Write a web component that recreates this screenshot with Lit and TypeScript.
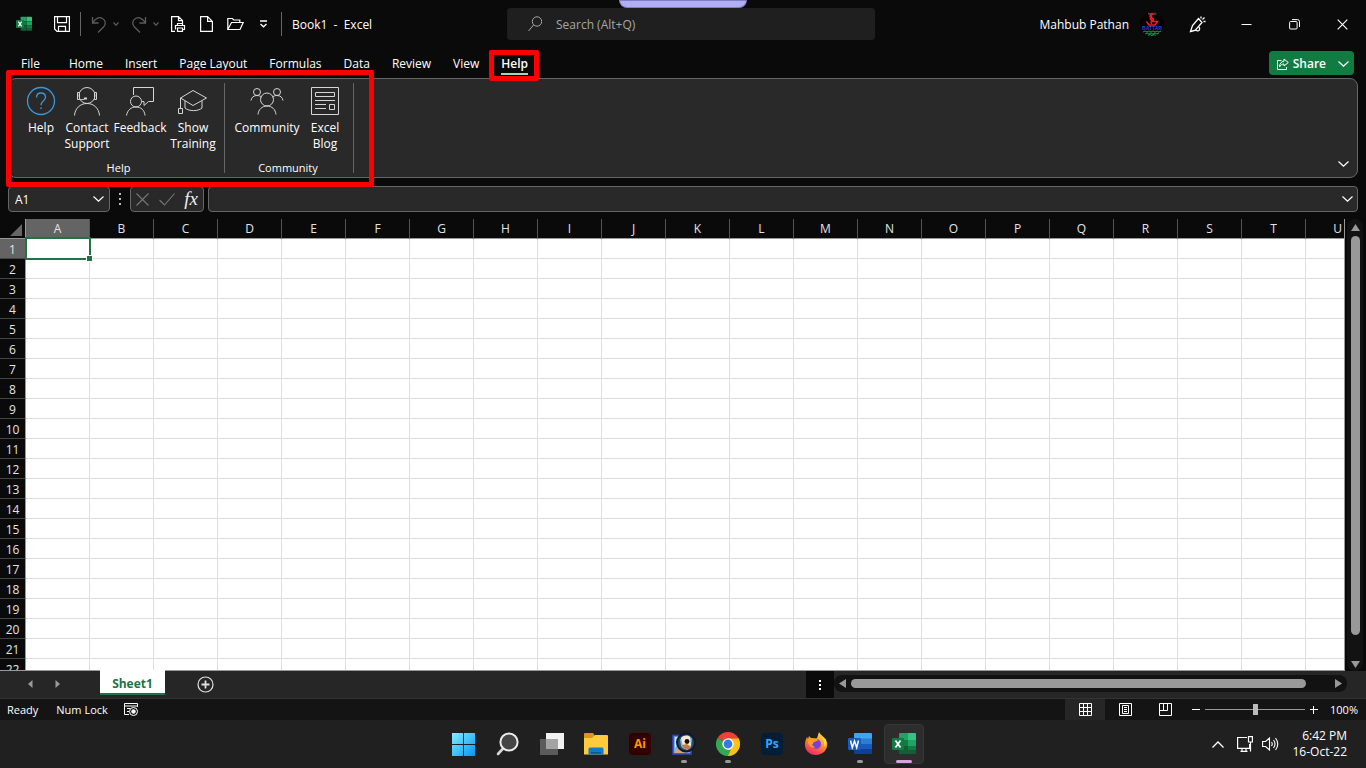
import { LitElement, html, svg, css, TemplateResult } from "lit";
import { customElement } from "lit/decorators.js";
import { classMap } from "lit/directives/class-map.js";

const icon = (w: number, h: number, body: unknown, cls = "") =>
  html`<svg class=${cls} width=${w} height=${h} viewBox="0 0 ${w} ${h}" fill="none" stroke="currentColor" aria-hidden="true">${body}</svg>`;

const chevron = (w = 11, h = 6) =>
  icon(w, h, svg`<path d="M.5 .5 L${w / 2} ${h - 0.8} L${w - 0.5} .5" stroke-width="1.2"/>`);

const excelLogo = (size: number) => html`<svg width=${size} height=${size} viewBox="0 0 24 24" aria-hidden="true">
  <path d="M8 1h8v7H7V2a1 1 0 0 1 1-1z" fill="#21a366"/>
  <path d="M16 1h7a1 1 0 0 1 1 1v6h-8z" fill="#33c481"/>
  <path d="M7 8h9v6H7z" fill="#107c41"/>
  <path d="M16 8h8v6h-8z" fill="#21a366"/>
  <path d="M7 14h9v8H8a1 1 0 0 1-1-1z" fill="#185c37"/>
  <path d="M16 14h8v7a1 1 0 0 1-1 1h-7z" fill="#185c37"/>
  <path d="M16 14h8v4h-8z" fill="#107c41"/>
  <rect x="0" y="6" width="12" height="12" rx="1" fill="#107c41"/>
  <path d="M3.500 8.500l5 7M8.500 8.500l-5 7" stroke="#fff" stroke-width="1.800"/>
</svg>`;

const wordLogo = html`<svg width="24" height="24" viewBox="0 0 24 24" aria-hidden="true">
  <path d="M7 1h16a1 1 0 0 1 1 1v5H6V2a1 1 0 0 1 1-1z" fill="#41a5ee"/>
  <path d="M6 6.500h18v5.500H6z" fill="#2b7cd3"/>
  <path d="M6 12h18v5H6z" fill="#185abd"/>
  <path d="M6 17h18v4a1 1 0 0 1-1 1H7a1 1 0 0 1-1-1z" fill="#103f91"/>
  <rect x="0" y="6" width="13" height="12" rx="1" fill="#185abd"/>
  <path d="M2.500 8.500l1.800 7 2.200-6.500 2.200 6.500 1.800-7" fill="none" stroke="#fff" stroke-width="1.500"/>
</svg>`;

const winLogo = html`<svg width="24" height="24" viewBox="0 0 24 24" aria-hidden="true">
  <defs><linearGradient id="win" x1="0" y1="0" x2="1" y2="1"><stop offset="0" stop-color="#7df0fd"/><stop offset="1" stop-color="#0a93f5"/></linearGradient></defs>
  <path d="M0 1h11v11H0zM12 1h11v11H12zM0 13h11v11H0zM12 13h11v11H12z" fill="url(#win)"/>
</svg>`;

const searchLogo = html`<svg width="24" height="24" viewBox="0 0 24 24" aria-hidden="true">
  <path d="M8 15.500L2 22" stroke="#d5d5d5" stroke-width="2.600" stroke-linecap="round"/>
  <circle cx="13" cy="10" r="8.600" fill="#454545" stroke="#ececec" stroke-width="2"/>
</svg>`;

const taskViewLogo = html`<svg width="24" height="24" viewBox="0 0 24 24" aria-hidden="true">
  <rect x="6" y="1" width="18" height="16" fill="#f1f1f1"/>
  <rect x="0" y="7" width="18" height="16" fill="#5b5b5b"/>
  <rect x="6" y="7" width="12" height="10" fill="#a3a3a3"/>
</svg>`;

const folderLogo = html`<svg width="24" height="24" viewBox="0 0 24 24" aria-hidden="true">
  <path d="M0 2a1 1 0 0 1 1-1h8l1.500 2v3H0z" fill="#d99b0d"/>
  <path d="M0 6h8l3-3h12a1 1 0 0 1 1 1v18.500H0z" fill="#ffca3e"/>
  <path d="M4.500 22.500V17a1.500 1.500 0 0 1 1.500-1.500h12a1.500 1.500 0 0 1 1.500 1.500v5.500z" fill="#117ccb"/>
  <path d="M7 20h10v1.500H7z" fill="#0a5596"/>
</svg>`;

const viewerLogo = html`<svg width="24" height="24" viewBox="0 0 24 24" aria-hidden="true">
  <rect x="1" y="3.500" width="18" height="18.500" fill="#6fb4e4" stroke="#3a3fc0" stroke-width="1.600"/>
  <path d="M2 21l6-9 6 9z" fill="#d6a676"/>
  <path d="M3 5h5v6l-5 5z" fill="#c5e6f6"/>
  <circle cx="14" cy="10.500" r="9" fill="#2a4a66" stroke="#10182b" stroke-width="2"/>
  <path d="M8 8c2-5 9-6 12-1l-1 8c-3 4-8 3-10-1z" fill="#7fb3d6"/>
  <path d="M9 6c3-3 7-3 9-1l1 8-4 5-4-4z" fill="#f5ead5"/>
  <path d="M10 13l5-1 4 3c-2 4-7 3-9-2z" fill="#c87c3c"/>
  <circle cx="15" cy="9.500" r="2.400" fill="#111"/>
</svg>`;

const chromeLogo = html`<svg width="24" height="24" viewBox="0 0 24 24" aria-hidden="true">
  <path d="M12 12L1.600 6A12 12 0 0 1 22.400 6z" fill="#ea4335"/>
  <path d="M12 12L22.400 6A12 12 0 0 1 12 24z" fill="#fbc116"/>
  <path d="M12 12L12 24A12 12 0 0 1 1.600 6z" fill="#34a853"/>
  <path d="M12 6.500H22.600L17 15 12 24l5-9z" fill="#fbc116"/>
  <path d="M1.600 6L7 15l5 3 3-.5L12 24 5 20z" fill="#34a853"/>
  <circle cx="12" cy="12" r="5.700" fill="#fff"/><circle cx="12" cy="12" r="4.400" fill="#3579e8"/>
</svg>`;

const firefoxLogo = html`<svg width="24" height="24" viewBox="0 0 24 24" aria-hidden="true">
  <defs><linearGradient id="fox" x1=".8" y1="0" x2=".3" y2="1"><stop offset="0" stop-color="#ffe84a"/><stop offset=".45" stop-color="#ff9426"/><stop offset="1" stop-color="#f0246c"/></linearGradient></defs>
  <path d="M15 0c1 3 7 5 8.200 11C24 18 18.500 23 12 23 5 23 .500 18 1 12c0-3 1-5 2-7l1 2 1-3 2.500 2.500h5C14 5 14 2 15 0z" fill="url(#fox)"/>
  <circle cx="12" cy="12" r="5" fill="#7d3fd8"/>
  <path d="M4 7l4-1 5 1 1 1.500-4 1.500-2 3 3 2.500c-4 1-8-3-7-8.500z" fill="#ff9d1f"/>
  <path d="M17 5c3 3 4 6 3 10 2-2 2.500-5 1.500-8z" fill="#ffe04a"/>
</svg>`;

const avatar = html`<svg width="24" height="24" viewBox="0 0 24 24" role="img" aria-label="Account picture">
  <circle cx="12" cy="12" r="12" fill="#000"/>
  <path d="M8 .8h8l1 2H8z" fill="#444"/>
  <path d="M13.500 1.800c-3.500-.5-4.500 3-2 4.200 3 1 2 3.500-1 4M11.500 2v10M6.500 9.500l2.500 3.500h6l2.500-3.500h-4M9.500 6.500l4.500 3" fill="none" stroke="#ee1c25" stroke-width="1.500"/>
  <text x="12" y="18" text-anchor="middle" font-family="Liberation Sans, sans-serif" font-size="5" font-weight="700" fill="#3a42d0">BATTAR</text>
  <path d="M3 20l2-1 2 1 2-1 2 1 2-1 2 1 2-1 2 1 2-1M5 22l2-1 2 1 2-1 2 1 2-1 2 1 2-1M8 23.500l2-1 2 1 2-1 2 1" fill="none" stroke="#0e9247" stroke-width="1.100"/>
</svg>`;

const art: Record<string, TemplateResult> = {
  help: icon(30, 30, svg`<circle cx="15" cy="15" r="13.500" stroke="#3a96dd" stroke-width="1.300"/><path d="M10.500 11.500C10.500 8.500 12.500 7 15 7s4.500 1.500 4.500 4.200c0 3.800-4.500 3.800-4.500 8" stroke="#3a96dd" stroke-width="1.300"/><path d="M14.300 21.500h1.500v1.500h-1.500z" fill="#3a96dd" stroke="none"/>`),
  support: icon(30, 30, svg`<circle cx="15" cy="9.500" r="8"/><path d="M7.500 6.500h-2v7h2zM22.500 6.500h2v7h-2zM2.500 29.500c.5-7 5.500-12 12.500-12s12 5 12.500 12M7.500 12.500c1 1.500 3 1.500 5 .5"/><path d="M12 11.500h3v2h-3z" fill="currentColor" stroke="none"/>`),
  feedback: icon(30, 30, svg`<path d="M8.500 9V1.500h20v14h-5l-4.500 4v-4h-2"/><circle cx="11" cy="15.500" r="5.500"/><path d="M1.500 29.500c1-5.500 4.500-8.500 9.500-8.500s8.500 3 9 8.500"/>`),
  training: icon(30, 30, svg`<path d="M2.500 12L15 4.500 28.500 12 15 19.500zM7 15v7c4 3.500 13 3.500 17 0v-7M2.500 12v10M.5 22.500h4v5h-4z" />`),
  community: icon(34, 30, svg`<circle cx="17" cy="13.500" r="6.500"/><circle cx="7" cy="6" r="3.500"/><circle cx="27" cy="6" r="3.500"/><path d="M8 28.500c.5-5 4-8.500 9-8.500s8.500 3.500 9 8.500M1 14.500c.5-3 2.500-5 6-5 2 0 3 .5 4.500 1.500M33 14.500c-.5-3-2.500-5-6-5-2 0-3 .5-4.500 1.500"/>`),
  blog: icon(30, 30, svg`<path d="M1.500 1.500h27v27h-27z"/><path d="M5.500 6.500h19v4h-19zM5 14.500h20M5 18.500h11M5 22.500h11M19.500 18.500h5v5h-5z"/>`),
};

const groups = [
  { name: "Help", cls: "g-help", items: [["help", "Help"], ["support", "Contact Support"], ["feedback", "Feedback"], ["training", "Show Training"]] },
  { name: "Community", cls: "g-community", items: [["community", "Community"], ["blog", "Excel Blog"]] },
];
const tabs = ["File", "Home", "Insert", "Page Layout", "Formulas", "Data", "Review", "View", "Help"];
const columns = "ABCDEFGHIJKLMNOPQRSTU".split("");
const rows = Array.from({ length: 22 }, (_, i) => i + 1);

@customElement("app-root")
export class AppRoot extends LitElement {
  static styles = css`
    :host { display: flex; flex-direction: column; height: 100vh; overflow: hidden; background: #0a0a0a; color: #fff; font: 12px/16px "Open Sans", "Noto Sans", sans-serif; }
    * { box-sizing: border-box; }
    button, input { font: inherit; color: inherit; background: none; border: 0; margin: 0; padding: 0; outline: none; }
    button { display: flex; align-items: center; justify-content: center; white-space: nowrap; }
    svg { display: block; flex: none; }

    .title { position: relative; display: grid; grid-template-columns: 1fr 368px 1fr; height: 48px; flex: none; align-items: center; padding-left: 16px; }
    .pull { position: absolute; top: 0; left: 50%; width: 128px; height: 8px; margin-left: -64px; background: #b0aef5; border: 1px solid #7f7dc4; border-radius: 0 0 8px 8px; }
    .quick { display: flex; align-items: center; }
    .quick .save { margin-left: 22px; }
    .rule { width: 1px; height: 24px; background: #666; }
    .quick .rule { margin: 0 10px; }
    .split { display: flex; align-items: center; gap: 6px; color: #5c5c5c; margin-right: 12px; }
    .files { display: flex; align-items: center; gap: 14px; }
    .doc { white-space: pre; padding-top: 2px; }
    .search { display: flex; align-items: center; gap: 14px; height: 32px; padding-left: 21px; border-radius: 4px; background: #1f1f1f; color: #a6a6a6; }
    .search input { flex: 1; min-width: 0; padding-top: 2px; }
    .search input::placeholder { color: #a6a6a6; opacity: 1; }
    .account { display: flex; align-items: center; justify-content: flex-end; }
    .account .user { margin-right: 11px; padding-top: 2px; }
    .account button { width: 48px; height: 48px; }
    .account .pen { margin-left: 10px; }

    .tabs { display: flex; align-items: center; height: 30px; flex: none; padding: 0 12px 0 10px; }
    .tab { position: relative; height: 30px; padding: 2px 11px 0; }
    .tab:first-child { margin-right: 7px; }
    .tab.on { font-weight: 600; }
    .tab.on::after { content: ""; position: absolute; left: 11px; right: 11px; bottom: 3px; height: 2px; background: #9fd8b7; }
    .mark { position: absolute; border: 5px solid #f00; border-radius: 2px; pointer-events: none; z-index: 2; }
    .tab .mark { inset: 2px 0 -3px -1px; }
    .share { margin-left: auto; display: flex; height: 24px; border-radius: 4px; background: #107c41; font-weight: 600; }
    .share button { padding-top: 1px; }
    .share .main { gap: 4px; padding-left: 8px; padding-right: 12px; }
    .share .more { padding-right: 5px; }

    .ribbon { position: relative; display: flex; flex: none; height: 100px; margin: 0 8px 8px; background: #292929; border: 1px solid #666; border-radius: 8px; }
    .ribbon .mark { inset: -9px auto -10px -3px; width: 368px; }
    .group { display: flex; flex-direction: column; justify-content: space-between; margin: 4px 0; border-right: 1px solid #666; text-align: center; }
    .items { display: flex; justify-content: center; align-items: flex-start; }
    .g-help { width: 216px; padding: 0 5px 0 9px; }
    .g-help .items { justify-content: flex-start; }
    .g-community { width: 129px; padding-right: 2px; }
    .cmd { display: flex; flex-direction: column; gap: 4px; padding: 3px 0 0; color: #d6d6d6; }
    .cmd span { white-space: normal; color: #fff; }
    .w-help, .w-support { width: 46px; }
    .w-feedback { width: 60px; }
    .w-training { width: 46px; }
    .w-community { width: 74px; }
    .w-blog { width: 42px; }
    .caption { font-size: 11px; line-height: 10px; }
    .fold { position: absolute; right: 8px; bottom: 10px; }

    .formula { display: flex; align-items: center; flex: none; height: 26px; margin: 0 8px 7px; }
    .box { display: flex; align-items: center; height: 26px; border: 1px solid #666; border-radius: 4px; background: #292929; }
    .name { width: 102px; padding: 0 5px 0 6px; }
    .name input { flex: 1; min-width: 0; padding-top: 2px; }
    .dots { width: 20px; display: flex; justify-content: center; }
    .tools { width: 74px; justify-content: space-between; padding: 0 5px; color: #777; margin-right: 4px; }
    .fx { font: italic 19px/22px "Liberation Serif", serif; color: #eee; }
    .entry { flex: 1; padding: 0 4px 0 8px; }
    .entry input { flex: 1; min-width: 0; align-self: stretch; }

    .sheet { display: flex; flex: 1; min-height: 0; }
    .grid { flex: 1; min-width: 0; overflow: hidden; background: #fff; border-right: 1px solid #999; border-bottom: 1px solid #999; }
    table { border-collapse: separate; border-spacing: 0; table-layout: fixed; width: 1370px; }
    .c0 { width: 26px; }
    .c1 { width: 64px; }
    th { background: #0a0a0a; color: #e4e4e4; font-weight: 400; padding: 0; text-align: center; }
    thead th { height: 20px; line-height: 18px; border-right: 1px solid #555; border-bottom: 1px solid #999; }
    tbody th { height: 20px; line-height: 17px; padding-top: 2px; border-right: 1px solid #999; border-bottom: 1px solid #444; }
    th.on { background: #646464; }
    thead .corner { border-right-color: #999; }
    .corner svg { margin: 2px 0 0 10px; }
    td { position: relative; padding: 0; border-right: 1px solid #dedede; border-bottom: 1px solid #dedede; }
    .sel { position: absolute; inset: -2px -2px -2px -1px; border: 2px solid #217346; z-index: 1; }
    .sel::after { content: ""; position: absolute; right: -3px; bottom: -3px; width: 5px; height: 5px; background: #217346; outline: 1px solid #fff; }
    .vbar { display: flex; flex-direction: column; align-items: center; width: 16px; margin: 0 3px 0 2px; padding: 5px 0 3px; border-radius: 8px; background: #121212; color: #999; gap: 5px; }
    .vtrack { flex: 1; width: 9px; }
    .vthumb { height: 95%; border-radius: 5px; background: #999; }

    .book { display: flex; align-items: center; flex: none; height: 27px; background: #262626; color: #999; }
    .nav { display: flex; gap: 22px; padding: 0 40px 2px 28px; }
    .sheet-tab { align-self: flex-start; width: 65px; height: 25px; margin-top: -1px; padding-top: 4px; border-bottom: 2px solid #217346; background: #fff; color: #217346; font-weight: 700; z-index: 1; }
    .add { margin-left: 32px; color: #e0e0e0; }
    .grip { width: 28px; height: 27px; margin-left: auto; display: flex; align-items: center; justify-content: center; background: #0a0a0a; }
    .hbar { display: flex; align-items: center; width: 513px; height: 17px; margin: 0 19px 2px 0; padding: 0 5px; gap: 5px; background: #121212; border-radius: 8px; }
    .htrack { flex: 1; height: 9px; }
    .hthumb { width: 95%; height: 9px; border-radius: 5px; background: #999; }

    .status { display: flex; align-items: center; flex: none; height: 22px; background: #141414; border-top: 1px solid #333; padding: 0 8px 0 7px; font-size: 11px; }
    .status .num { margin: 0 16px 0 18px; }
    .views { display: flex; align-self: stretch; margin-left: auto; }
    .views button { width: 40px; }
    .views .on { background: #262626; }
    .zoom { display: flex; align-items: center; gap: 5px; margin-left: 7px; }
    .zoom input { appearance: none; width: 100px; height: 12px; background: linear-gradient(#999, #999) center / 100% 1px no-repeat; }
    .zoom input::-webkit-slider-thumb { appearance: none; width: 5px; height: 11px; background: #bbb; }
    .percent { width: 40px; text-align: right; }

    .taskbar { display: grid; grid-template-columns: 1fr auto 1fr; flex: none; height: 48px; background: #202020; }
    .apps { grid-column: 2; display: flex; align-items: center; padding-left: 2px; }
    .app { position: relative; width: 40px; height: 40px; margin: 0 2px; border-radius: 4px; }
    .app.active { background: #2d2d2d; border: 1px solid #363636; }
    .app.run::after { content: ""; position: absolute; bottom: 1px; left: 17px; width: 6px; height: 3px; border-radius: 2px; background: #999; }
    .app.active::after { left: 11px; width: 16px; bottom: 0; background: #d9a0e2; }
    .tile { width: 22px; height: 22px; border-radius: 4px; font-size: 12px; font-weight: 700; line-height: 22px; }
    .ai { background: #330000; color: #ff9a00; }
    .ps { background: #001e36; color: #31a8ff; }
    .tray { display: flex; align-items: center; justify-content: flex-end; gap: 9px; padding-right: 19px; }
    .tray .up { margin-right: 4px; }
    .clock { text-align: right; margin-left: 4px; }
  `;

  private app(label: string, body: unknown, state = "") {
    return html`<button class=${classMap({ app: true, run: state !== "", active: state === "active" })} aria-label=${label}>${body}</button>`;
  }

  render() {
    return html`
      <header class="title">
        <div class="pull"></div>
        <div class="quick">
          ${excelLogo(16)}
          <button class="save" aria-label="Save">${icon(16, 16, svg`<path d="M.6.6h14.800v14.800H3L.6 13zM3.500.6v6h9v-6M4.500 15.400v-5h7v5" stroke-width="1.200"/>`)}</button>
          <span class="rule"></span>
          <span class="split"><button aria-label="Undo">${icon(16, 17, svg`<path d="M1.500 1v6h6M1.500 7C4 2.500 8 .5 11.500 2.500s3.500 6 1 8.500l-5.500 5.500" stroke-width="1.300"/>`)}</button><button aria-label="Undo list">${chevron(6, 4)}</button></span>
          <span class="split"><button aria-label="Redo">${icon(16, 17, svg`<path d="M14.500 1v6h-6M14.500 7C12 2.500 8 .5 4.500 2.500s-3.500 6-1 8.500l5.500 5.500" stroke-width="1.300"/>`)}</button><button aria-label="Redo list">${chevron(6, 4)}</button></span>
          <span class="files">
            <button aria-label="Quick print">${icon(15, 16, svg`<path d="M4 15.400H.600V.600h6.900l4 4V7M7.500.600v4h4M6.500 9.500V7.500h5v2M4.500 13.500v-4h9v4h-2M6.500 12h5v3.400h-5z" stroke-width="1.200"/>`)}</button>
            <button aria-label="New">${icon(13, 16, svg`<path d="M.6.6h7l4.800 4.800v10H.6zM7.600.6v4.800h4.800" stroke-width="1.200"/>`)}</button>
            <button aria-label="Open">${icon(17, 14, svg`<path d="M.8 12.500V1.500h4.500l1.500 1.500h6v2.500M.8 12.500L4.500 5.500h11.700l-3.200 7z" stroke-width="1.200"/>`)}</button>
            <button aria-label="Customize toolbar">${icon(13, 8, svg`<path d="M2 1h7M2.500 4l3 2.800 3-2.800" stroke-width="1.300"/>`)}</button>
          </span>
          <span class="rule"></span>
          <span class="doc">Book1  -  Excel</span>
        </div>
        <label class="search">${icon(14, 16, svg`<circle cx="9" cy="5.500" r="4.700"/><path d="M5.500 9L.5 15"/>`)}<input type="search" placeholder="Search (Alt+Q)" aria-label="Search" /></label>
        <div class="account">
          <span class="user">Mahbub Pathan</span>${avatar}
          <button class="pen" aria-label="Coming soon">${icon(18, 17, svg`<path d="M1.500 15.500L3.500 9.500 9.500 2.500l3.500 4-6.500 7.500zM1.500 15.500L7 14c1 1.500 3 1 3.500-.5s0-2-.5-2.500M12 2.500V.5M13.500 3.500l2-2M14.500 5.500h2" stroke-width="1.300"/>`)}</button>
          <button aria-label="Minimize">${icon(11, 11, svg`<path d="M.5 5.500h10"/>`)}</button>
          <button aria-label="Restore">${icon(11, 11, svg`<rect x=".6" y="2.500" width="7.500" height="7.500" rx="1"/><path d="M3 .6h5.500a2 2 0 0 1 2 2V8"/>`)}</button>
          <button aria-label="Close">${icon(11, 11, svg`<path d="M.7.700l9.600 9.600M10.300.700L.700 10.300" stroke-width="1.100"/>`)}</button>
        </div>
      </header>

      <nav class="tabs">
        ${tabs.map((t) => html`<button class=${classMap({ tab: true, on: t === "Help" })}>${t}${t === "Help" ? html`<span class="mark"></span>` : ""}</button>`)}
        <div class="share">
          <button class="main">${icon(12, 12, svg`<path d="M4.500 2.500h-4v9h9V9"/><path d="M7 1l4.300 3.500L7 8V6C5 6 3.500 7 2.500 9c0-3.500 2-5.500 4.500-5.800z"/>`)}Share</button>
          <button class="more" aria-label="Share options">${chevron()}</button>
        </div>
      </nav>

      <section class="ribbon">
        ${groups.map((g) => html`<div class="group ${g.cls}">
          <div class="items">${g.items.map(([k, l]) => html`<button class="cmd w-${k}">${art[k]}<span>${l}</span></button>`)}</div>
          <div class="caption">${g.name}</div>
        </div>`)}
        <button class="fold" aria-label="Ribbon display options">${chevron()}</button>
        <div class="mark"></div>
      </section>

      <section class="formula">
        <div class="box name"><input aria-label="Name box" .value=${"A1"} /><button aria-label="Names">${chevron()}</button></div>
        <span class="dots">${icon(2, 12, svg`<path d="M0 1h2M0 6h2M0 11h2" stroke="#bbb" stroke-width="2"/>`)}</span>
        <div class="box tools">
          <button aria-label="Cancel">${icon(13, 13, svg`<path d="M.5.500l12 12M12.500.500l-12 12" stroke-width="1.100"/>`)}</button>
          <button aria-label="Enter">${icon(16, 13, svg`<path d="M.5 7l5 5L15.500.500" stroke-width="1.100"/>`)}</button>
          <button class="fx" aria-label="Insert function">fx</button>
        </div>
        <div class="box entry"><input aria-label="Formula bar" /><button aria-label="Expand formula bar">${chevron()}</button></div>
      </section>

      <main class="sheet">
        <div class="grid">
          <table>
            <colgroup><col class="c0" />${columns.map(() => html`<col class="c1" />`)}</colgroup>
            <thead><tr><th class="corner">${icon(12, 12, svg`<path d="M12 0v12H0z" fill="#666" stroke="none"/>`)}</th>${columns.map((c) => html`<th scope="col" class=${c === "A" ? "on" : ""}>${c}</th>`)}</tr></thead>
            <tbody>${rows.map((r) => html`<tr><th scope="row" class=${r === 1 ? "on" : ""}>${r}</th>${columns.map((c) => html`<td>${r === 1 && c === "A" ? html`<div class="sel"></div>` : ""}</td>`)}</tr>`)}</tbody>
          </table>
        </div>
        <div class="vbar">
          ${icon(9, 7, svg`<path d="M4.500 0L9 7H0z" fill="currentColor" stroke="none"/>`)}
          <div class="vtrack"><div class="vthumb"></div></div>
          ${icon(9, 7, svg`<path d="M4.500 7L9 0H0z" fill="currentColor" stroke="none"/>`)}
        </div>
      </main>

      <section class="book">
        <div class="nav">
          <button aria-label="Previous sheet">${icon(5, 8, svg`<path d="M4.500 0v8L0 4z" fill="currentColor" stroke="none"/>`)}</button>
          <button aria-label="Next sheet">${icon(5, 8, svg`<path d="M.5 0v8L5 4z" fill="currentColor" stroke="none"/>`)}</button>
        </div>
        <button class="sheet-tab">Sheet1</button>
        <button class="add" aria-label="New sheet">${icon(17, 17, svg`<circle cx="8.500" cy="8.500" r="7.500" stroke-width="1.200"/><path d="M4.500 8.500h8M8.500 4.500v8" stroke-width="1.800"/>`)}</button>
        <div class="grip">${icon(2, 10, svg`<path d="M0 1h2M0 5h2M0 9h2" stroke="#fff" stroke-width="2"/>`)}</div>
        <div class="hbar">
          ${icon(7, 9, svg`<path d="M7 0v9L0 4.500z" fill="currentColor" stroke="none"/>`)}
          <div class="htrack"><div class="hthumb"></div></div>
          ${icon(7, 9, svg`<path d="M0 0v9l7-4.500z" fill="currentColor" stroke="none"/>`)}
        </div>
      </section>

      <footer class="status">
        <span>Ready</span><span class="num">Num Lock</span>
        ${icon(15, 13, svg`<path d="M5 11.500H.500v-11h13V4M.500 3h13M3 5.500h3M3 8.500h2"/><circle cx="9.500" cy="8.500" r="4"/><circle cx="9.500" cy="8.500" r="1.800" fill="currentColor"/>`)}
        <div class="views">
          <button class="on" aria-label="Normal view">${icon(13, 13, svg`<path d="M.5.500h12v12H.500zM4.500.500v12M8.500.500v12M.500 4.500h12M.500 8.500h12"/>`)}</button>
          <button aria-label="Page layout view">${icon(13, 13, svg`<path d="M.5.500h12v12H.500zM3.500 2.500h6v8h-6zM5 4.500h3M5 6.500h3M5 8.500h3"/>`)}</button>
          <button aria-label="Page break view">${icon(13, 13, svg`<path d="M.5.500h12v12H.500zM4.500.500v7M8.500.500v7M.500 7.500h8"/>`)}</button>
        </div>
        <div class="zoom">
          <button aria-label="Zoom out">${icon(8, 8, svg`<path d="M0 3.500h8"/>`)}</button>
          <input type="range" min="0" max="100" value="50" aria-label="Zoom" />
          <button aria-label="Zoom in">${icon(8, 8, svg`<path d="M0 3.500h8M3.500 0v8"/>`)}</button>
        </div>
        <span class="percent">100%</span>
      </footer>

      <footer class="taskbar">
        <div class="apps">
          ${this.app("Start", winLogo)}${this.app("Find", searchLogo)}${this.app("Task view", taskViewLogo)}${this.app("Files", folderLogo)}
          ${this.app("Illustrator", html`<span class="tile ai">Ai</span>`)}
          ${this.app("Image viewer", viewerLogo, "run")}${this.app("Chrome", chromeLogo, "run")}
          ${this.app("Photoshop", html`<span class="tile ps">Ps</span>`)}
          ${this.app("Firefox", firefoxLogo)}${this.app("Word", wordLogo, "run")}${this.app("Excel", excelLogo(24), "active")}
        </div>
        <div class="tray">
          <button class="up" aria-label="Hidden icons">${icon(12, 7, svg`<path d="M.5 6.500L6 1l5.500 5.500" stroke-width="1.300"/>`)}</button>
          ${icon(16, 16, svg`<path d="M10 1.500H.600v10.900h12V8M3.500 15.400h7M5 12.500v3M9 12.500v3M11.500.600h3.900V6h-3.900zM13.500 6v9.500" stroke-width="1.200"/>`)}
          ${icon(17, 14, svg`<path d="M.6 4.500h3L7.500 1v12L3.600 9.500h-3zM9.500 5q1.500 2 0 4M11.500 3q3 4 0 8M13.500 1q4.500 6 0 12" stroke-width="1.100"/>`)}
          <div class="clock">6:42 PM<br />16-Oct-22</div>
        </div>
      </footer>
    `;
  }
}
